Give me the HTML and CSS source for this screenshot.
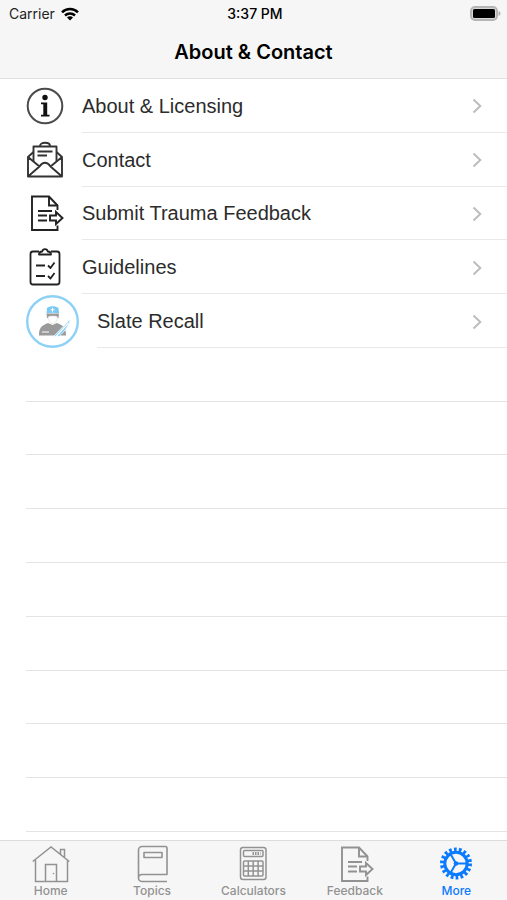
FILE: index.html
```html
<!DOCTYPE html>
<html lang="en">
<head>
<meta charset="utf-8">
<meta name="viewport" content="width=device-width, initial-scale=1">
<title>About &amp; Contact</title>
<link rel="stylesheet" href="styles.css">
</head>
<body>
<svg class="defs" aria-hidden="true">
  <symbol id="chevron" viewBox="0 0 10 16"><path d="M1.500 1.500 8.300 8l-6.800 6.500" fill="none" stroke="currentColor" stroke-width="2"/></symbol>
  <symbol id="document" viewBox="0 0 38 38">
    <g fill="none" stroke="currentColor" stroke-width="1.900">
      <path d="M31.500 31.500V36H6V2.500h17l8.500 9V16"/>
      <path d="M23 2.500v9h8.500"/>
      <path d="M12 17h14M12 21.500h9M12 26.500h9"/>
      <path d="M24 21.500h6V18l6.500 6-6.500 6v-3.500h-6z"/>
    </g>
  </symbol>
</svg>
<div class="app">
  <header class="header">
    <div class="status">
      <div class="carrier">Carrier
        <svg class="wifi" viewBox="0 0 18 14" aria-hidden="true">
          <g fill="none" stroke="#000" stroke-width="2.500"><path d="M1 5.300a11.500 11.500 0 0 1 16 0"/><path d="M4 8.500a7.200 7.200 0 0 1 10 0"/></g>
          <path d="M9 13.500 6 10.600a4.200 4.200 0 0 1 6 0z"/>
        </svg>
      </div>
      <time class="time">3:37 PM</time>
      <svg class="battery" viewBox="0 0 31 15" aria-hidden="true">
        <rect x="1" y="1" width="26" height="13" rx="4" fill="#d8d8d8" stroke="#b5b5b5" stroke-width="2"/>
        <rect x="3" y="3" width="22" height="9" rx="1.500"/>
        <path d="M28.500 5v5c1.300-.5 2-1.400 2-2.500s-.7-2-2-2.500z" fill="#b0b0b0"/>
      </svg>
    </div>
    <h1 class="title">About &amp; Contact</h1>
  </header>
  <main class="content">
    <ul class="list">
      <li><a class="row" href="#about">
        <svg class="icon" viewBox="0 0 38 38" aria-hidden="true">
          <circle cx="19" cy="19" r="17.300" fill="none" stroke="#4b4b4b" stroke-width="2"/>
          <circle cx="19" cy="10.500" r="2.700" fill="#111"/>
          <path d="M15 15.500h6.200v12.200h2.300v1.800H15v-1.800h2.300V17.300H15z" fill="#111"/>
        </svg>
        <span class="label">About &amp; Licensing<svg class="chevron" aria-hidden="true"><use href="#chevron"/></svg></span></a></li>
      <li><a class="row" href="#contact">
        <svg class="icon" viewBox="0 0 38 38" aria-hidden="true">
          <g fill="none" stroke="#333" stroke-width="1.900" stroke-linejoin="round">
            <path d="M7.500 20V5.500h23V20M14 5c0-4.300 10-4.300 10 0"/>
            <path d="M7.500 11 2 16v19.500h34V16l-5.500-5M2 16l11.500 9.500M36 16l-11.500 9.500M2 35.500l11.500-10C17 20.500 21 20.500 24.500 25.500L36 35.500"/>
            <path d="M11.500 10.500h15M11.500 14.500h9.500"/>
          </g>
        </svg>
        <span class="label">Contact<svg class="chevron" aria-hidden="true"><use href="#chevron"/></svg></span></a></li>
      <li><a class="row" href="#trauma-feedback">
        <svg class="icon" aria-hidden="true"><use href="#document"/></svg>
        <span class="label">Submit Trauma Feedback<svg class="chevron" aria-hidden="true"><use href="#chevron"/></svg></span></a></li>
      <li><a class="row" href="#guidelines">
        <svg class="icon" viewBox="0 0 38 38" aria-hidden="true">
          <g fill="none" stroke="#222" stroke-width="1.800" stroke-linejoin="round">
            <path d="M13 3.500H7A2.500 2.500 0 0 0 4.500 6v28A2.500 2.500 0 0 0 7 36.500h24a2.500 2.500 0 0 0 2.500-2.500V6A2.500 2.500 0 0 0 31 3.500h-6"/>
            <path d="M13 6.500c0-2 1-3 3.200-3 .6-3.200 5-3.200 5.600 0 2.200 0 3.200 1 3.200 3z"/>
            <path d="M10 17.500h9M10 28h9M22 17.500l2.500 2.500 4-5.500M22 28l2.500 2.500 4-5.500"/>
          </g>
        </svg>
        <span class="label">Guidelines<svg class="chevron" aria-hidden="true"><use href="#chevron"/></svg></span></a></li>
      <li><a class="row" href="#slate-recall">
        <svg class="avatar" viewBox="0 0 53 53" aria-hidden="true">
          <circle cx="26.500" cy="26.500" r="25.300" fill="#fff" stroke="#8dd2f6" stroke-width="2.400"/>
          <path d="M13 40.500c0-8 2.500-10 9-12.500l4.500 2 4.500-2c6.500 2.500 9 4.500 9 12.500z" fill="#9a9a9a"/>
          <path d="M20.500 18.500h12.500l-.5 5-2.500-2.500h-6.500l-2.500 2.500z" fill="#9a9a9a"/>
          <path d="M22 22c3-1.500 6.500-1.500 9.500 0-.3 3.500-2.500 6.500-4.800 6.500S22.300 25.500 22 22z" fill="#fff" stroke="#d4d4d4" stroke-width=".6"/>
          <path d="M21 13c3-2.300 8.500-2.300 11.500 0l.5 5.500c-4-1-8.500-1-12.500 0z" fill="#7ac9f2"/>
          <path d="M24.500 14.800h4M26.500 12.800v4M16 37h7" stroke="#fff"/>
          <path d="M27.500 41.500 44 24.500c0 4.500-5 11.500-11 17z" fill="#7ac9f2" stroke="#fff" stroke-width=".8"/>
          <path d="M30 41.500 42.500 28" stroke="#fff" stroke-width="1.200"/>
        </svg>
        <span class="label">Slate Recall<svg class="chevron" aria-hidden="true"><use href="#chevron"/></svg></span></a></li>
      <li class="blank"></li><li class="blank"></li><li class="blank"></li>
      <li class="blank"></li><li class="blank"></li><li class="blank"></li>
      <li class="blank"></li><li class="blank"></li><li class="blank"></li>
    </ul>
  </main>
  <nav class="tabs" aria-label="Main">
    <a class="tab" href="#home">
      <svg class="tab-icon" viewBox="0 0 38 38" aria-hidden="true"><g fill="none" stroke="currentColor" stroke-width="1.500">
        <path d="M.7 16.500 19 2l18.300 14.500M3.500 14.500V36.500h32v-22M28.500 9V4.500h4V12"/><path d="M13.500 36.500v-17h11v17"/></g><circle cx="21.500" cy="28.500" r=".8" fill="currentColor"/></svg>
      Home</a>
    <a class="tab" href="#topics">
      <svg class="tab-icon" viewBox="0 0 38 38" aria-hidden="true"><g fill="none" stroke="currentColor" stroke-width="1.600" stroke-linejoin="round">
        <path d="M34 36.500H9A3.500 3.500 0 0 1 5.500 33V5A3.500 3.500 0 0 1 9 1.500h23.500a1.500 1.500 0 0 1 1.500 1.500v26.500H9A3.500 3.500 0 0 0 5.500 33"/><rect x="11" y="7.500" width="18" height="5"/></g></svg>
      Topics</a>
    <a class="tab" href="#calculators">
      <svg class="tab-icon" viewBox="0 0 38 38" aria-hidden="true"><g fill="none" stroke="currentColor" stroke-width="1.500">
        <rect x="6.500" y="2.500" width="25.500" height="32" rx="2.500"/><rect x="9.500" y="5.500" width="19.500" height="6" rx="1"/><rect x="9.500" y="16" width="19.500" height="15" rx="1"/><path d="M14.300 16v15M19.200 16v15M24.100 16v15M9.500 21h19.500M9.500 26h19.500"/><path d="M18.500 8.500h8" stroke-width="3" stroke-dasharray="1.500 1"/></g></svg>
      Calculators</a>
    <a class="tab" href="#feedback">
      <svg class="tab-icon" aria-hidden="true"><use href="#document"/></svg>
      Feedback</a>
    <a class="tab active" href="#more" aria-current="page">
      <svg class="tab-icon" viewBox="0 0 38 38" aria-hidden="true"><g fill="none" stroke="currentColor">
        <circle cx="19" cy="18.500" r="14" stroke-width="4" stroke-dasharray="2.700 2.187"/><circle cx="19" cy="18.500" r="11.200" stroke-width="3"/><path d="M19 18.500h11M19 18.500 13.500 9M19 18.500 13.500 28" stroke-width="2"/></g><circle cx="19" cy="18.500" r="2.300" fill="currentColor"/></svg>
      More</a>
  </nav>
</div>
</body>
</html>
```
FILE: styles.css
```css
* { box-sizing: border-box; }
body { margin: 0; background: #fff; color: #2c2c2c; font-family: Inter, "Liberation Sans", sans-serif; }
a { color: inherit; text-decoration: none; }
.defs { display: none; }
.app { display: flex; flex-direction: column; min-height: 100vh; }

.header { background: #f6f6f6; border-bottom: 1px solid #e0e0e0; color: #000; }
.status { display: grid; grid-template-columns: 1fr auto 1fr; align-items: center; height: 27px; padding: 0 6px 0 9px; font-size: 14px; }
.carrier { display: flex; align-items: center; gap: 6px; color: #222; }
.wifi { width: 18px; height: 14px; }
.time { font-weight: 500; }
.battery { width: 31px; height: 15px; justify-self: end; }
.title { margin: 0; padding-bottom: 1px; font-size: 20px; line-height: 50px; font-weight: 600; text-align: center; }

.content { flex: 1; display: flex; padding-bottom: 8px; }
.list { flex: 1; display: grid; grid-template-rows: repeat(14, minmax(53px, 1fr)); margin: 0; padding: 0 0 0 26px; list-style: none; }
.list li { display: flex; }
.row { flex: 1; display: flex; align-items: center; gap: 18px; }
.icon { flex: none; width: 38px; height: 38px; color: #222; }
.avatar { flex: none; width: 53px; height: 53px; }
.label { flex: 1; align-self: stretch; display: flex; align-items: center; justify-content: space-between; padding: 2px 25px 0 0; border-bottom: 1px solid #e8e8e8; font-family: "Liberation Sans", Arial, sans-serif; font-size: 20px; }
.chevron { width: 10px; height: 16px; color: #bdbdbf; }
.blank { border-bottom: 1px solid #e4e4e4; }

.tabs { display: grid; grid-template-columns: repeat(5, 1fr); height: 60px; border-top: 1px solid #dcdcdc; background: #f6f6f6; }
.tab { display: flex; flex-direction: column; align-items: center; padding-top: 4px; color: #929292; font-size: 12px; line-height: 16px; font-weight: 500; }
.tab-icon { width: 38px; height: 38px; }
.active { color: #0a7aff; }
```
